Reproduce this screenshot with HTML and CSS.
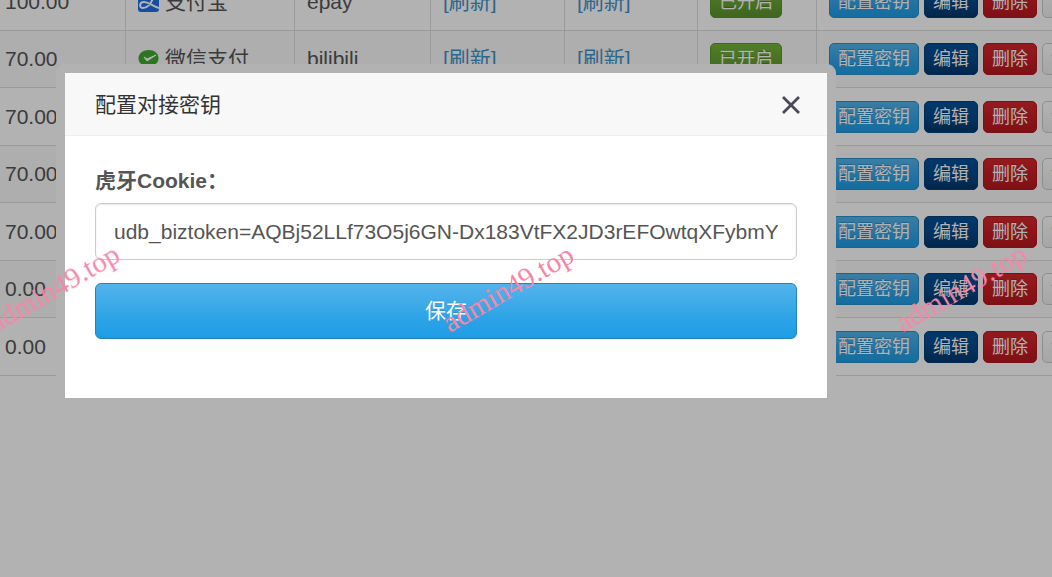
FILE: index.html
```html
<!DOCTYPE html>
<html lang="zh-CN">
<head>
<meta charset="utf-8">
<title>配置对接密钥</title>
<link rel="stylesheet" href="styles.css">
</head>
<body>
<main class="page">
<table class="channels">
<colgroup><col class="c-money"><col class="c-type"><col class="c-plugin"><col class="c-today"><col class="c-yesterday"><col class="c-status"><col></colgroup>
<tbody id="rows"></tbody>
</table>
</main>
<div class="overlay">
  <div class="frame">
    <section class="dialog" role="dialog" aria-modal="true" aria-labelledby="title">
      <header class="head">
        <h1 class="title" id="title">配置对接密钥</h1>
        <button class="close" type="button" aria-label="关闭"><svg width="20" height="20" viewBox="0 0 20 20"><path d="M2 2 18 18M18 2 2 18" fill="none" stroke="#4c4a57" stroke-width="2.8"/></svg></button>
      </header>
      <form class="form">
        <label class="label" for="cookie">虎牙Cookie：</label>
        <input class="input" id="cookie" type="text" value="udb_biztoken=AQBj52LLf73O5j6GN-Dx183VtFX2JD3rEFOwtqXFybmY">
        <button class="save" type="button">保存</button>
      </form>
    </section>
  </div>
</div>
<div class="marks" aria-hidden="true"><span class="mark mark-a">admin49.top</span><span class="mark mark-b">admin49.top</span><span class="mark mark-c">admin49.top</span></div>
<script src="rows.js"></script>
</body>
</html>
```
FILE: styles.css
```css
* { box-sizing: border-box; }
body {
  margin: 0;
  min-height: 100vh;
  overflow: hidden;
  background: #fff;
  color: #555;
  font: 21px/30px "Liberation Sans", "Noto Sans CJK SC", sans-serif;
}
button, input { font-family: inherit; }
.page { margin: -28px 0 0 -8px; overflow: hidden; }
.channels { width: calc(100% + 60px); table-layout: fixed; border-collapse: collapse; }
.c-money { width: 133px; }
.c-type { width: 169px; }
.c-plugin { width: 136px; }
.c-today { width: 134px; }
.c-yesterday { width: 133px; }
.c-status { width: 119px; }
.channels td {
  height: 57px;
  padding: 0 12px;
  border: 1px solid #ddd;
  vertical-align: middle;
  white-space: nowrap;
}
.channels tr:nth-child(odd) td { height: 58px; }
.channels tr:nth-child(even) td { background: #f9f9f9; }
.channels a { color: #4193c9; text-decoration: none; }
.type { display: flex; align-items: center; gap: 6px; }
.type svg { flex: none; }
.actions { display: flex; gap: 5px; }
.btn {
  display: block;
  flex: none;
  height: 32px;
  padding: 0 8px;
  border: 1px solid;
  border-radius: 5px;
  color: #fff;
  font-size: 18px;
  line-height: 28px;
  text-shadow: 0 -1px 0 rgba(0, 0, 0, .2);
}
.btn-green { background: linear-gradient(#73b73a, #5b912e); border-color: #5e952f; }
.btn-blue { background: linear-gradient(#54b4eb, #2fa4e7 60%, #1d9ce5); border-color: #2c8fc8; }
.btn-navy { background: linear-gradient(#04519b, #044687 60%, #033769); border-color: #033f78; }
.btn-red { background: linear-gradient(#d6272d, #c71c22 60%, #b5191f); border-color: #ad1a20; }
.btn-plain { background: linear-gradient(#fff, #eee); border-color: #ccc; color: #555; }
.overlay {
  position: fixed;
  inset: 0;
  padding: 64px 216px 0 56px;
  background: rgba(0, 0, 0, .3);
}
.frame { padding: 9px; border-radius: 9px; background: #b2b2b2; }
.dialog { background: #fff; }
.head {
  display: flex;
  align-items: center;
  justify-content: space-between;
  height: 63px;
  padding: 2px 26px 0 30px;
  border-bottom: 1px solid #eee;
  background: #f8f8f8;
}
.title { margin: 0; color: #333; font-size: 21px; font-weight: 400; }
.close { display: flex; padding: 0; border: 0; background: none; }
.form { display: flex; flex-direction: column; padding: 30px 30px 59px; }
.label { margin-bottom: 7px; font-weight: 700; }
.input {
  width: 100%;
  height: 57px;
  margin-bottom: 23px;
  padding: 0 18px;
  border: 1px solid #ccc;
  border-radius: 6px;
  background: #fff;
  box-shadow: inset 0 1px 2px rgba(0, 0, 0, .1);
  color: #555;
  font-size: 21px;
}
.save {
  height: 56px;
  padding: 0 12px 4px;
  border: 1px solid #2583b8;
  border-radius: 6px;
  background: linear-gradient(#54b4eb, #2fa4e7 60%, #1d9ce5);
  color: #fff;
  font-size: 21px;
  text-shadow: 0 -1px 0 rgba(0, 0, 0, .1);
}
.marks { position: fixed; inset: 0; overflow: hidden; pointer-events: none; }
.mark {
  position: absolute;
  top: 273px;
  color: #f686a8;
  font: 29px/30px "Liberation Serif", serif;
  transform: rotate(-30deg);
}
.mark-a { left: -19px; }
.mark-b { left: 435px; }
.mark-c { left: 888px; }
```
FILE: rows.js
```js
const alipay = '<svg width="21" height="21" viewBox="0 0 21 21"><rect width="21" height="21" rx="3" fill="#1c70e8"/><path d="M3 5h14M10 1v6M15 7C13 13 9 17 5 17c-4 0-4-6 1-6 5 0 8 4 15 6" fill="none" stroke="#fff" stroke-width="2"/></svg>';
const wechat = '<svg width="21" height="21" viewBox="0 0 21 21"><path d="M10.5 1C4.500 1 .5 5 .5 9.500c0 3 1.500 5 4 6.500l-1 3 4-2c7 1 13-2 13-7.500S16.500 1 10.500 1Z" fill="#41a832"/><path d="m6 8 3 4 9-6-9 4Z" fill="#fff" stroke="#fff"/></svg>';
const rows = [
  { money: '100.00', icon: alipay, type: '支付宝', plugin: 'epay' },
  { money: '70.00', icon: wechat, type: '微信支付', plugin: 'bilibili' },
  { money: '70.00' },
  { money: '70.00' },
  { money: '70.00' },
  { money: '0.00' },
  { money: '0.00' }
];
const details = ({ icon, type, plugin }) => type ? `
<td><div class="type">${icon}<span>${type}</span></div></td>
<td>${plugin}</td>
<td><a href="#">[刷新]</a></td>
<td><a href="#">[刷新]</a></td>
<td><button class="btn btn-green" type="button">已开启</button></td>` : '<td></td><td></td><td></td><td></td><td></td>';
document.getElementById('rows').innerHTML = rows.map(row => `<tr>
<td>${row.money}</td>${details(row)}
<td><div class="actions"><button class="btn btn-blue" type="button">配置密钥</button><button class="btn btn-navy" type="button">编辑</button><button class="btn btn-red" type="button">删除</button><button class="btn btn-plain" type="button">订单</button></div></td>
</tr>`).join('');
```
